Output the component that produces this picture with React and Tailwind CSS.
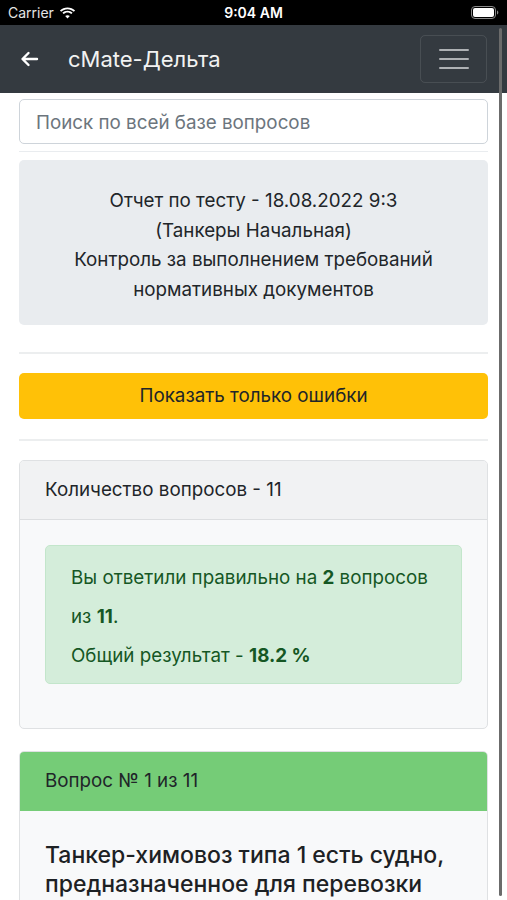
import React from 'react';

const font = { fontFamily: 'Inter, "Liberation Sans", Arial, sans-serif' };

const Wifi = () => (
  <svg width="17" height="12" viewBox="0 0 17 12" fill="#fff">
    <path d="M8.5 2.2c2.4 0 4.6.9 6.3 2.5l1.3-1.3C14.1 1.5 11.4.4 8.5.4S2.9 1.5.9 3.4l1.3 1.3C3.9 3.1 6.1 2.2 8.5 2.2z" />
    <path d="M8.5 5.6c1.5 0 2.8.6 3.8 1.5l1.3-1.3C12.3 4.5 10.5 3.8 8.5 3.8S4.7 4.5 3.4 5.8l1.3 1.3c1-.9 2.3-1.5 3.8-1.5z" />
    <path d="M8.5 9l2.3-2.3c-.6-.5-1.4-.8-2.3-.8s-1.7.3-2.3.8L8.5 9z" transform="translate(0 2.4)" />
  </svg>
);

const Battery = () => (
  <svg width="28" height="13" viewBox="0 0 28 13">
    <rect x="0.5" y="0.5" width="24" height="12" rx="3.5" fill="none" stroke="#8a8a8a" />
    <rect x="2" y="2" width="21" height="9" rx="2" fill="#fff" />
    <path d="M26 4.5v4c.8-.3 1.3-1.1 1.3-2s-.5-1.7-1.3-2z" fill="#8a8a8a" />
  </svg>
);

const StatusBar = () => (
  <div className="h-[25px] bg-black flex items-center justify-between px-[8px] text-white relative">
    <div className="flex items-center gap-[5px]">
      <span className="text-[14px] text-[#e5e5e5]">Carrier</span>
      <Wifi />
    </div>
    <span className="absolute left-0 right-0 text-center text-[14px] font-semibold">9:04 AM</span>
    <Battery />
  </div>
);

const NavBar = () => (
  <div className="h-[68px] bg-[#343a40] flex items-center justify-between pl-[20px] pr-[20px]">
    <div className="flex items-center">
      <svg width="19" height="16" viewBox="0 0 19 16" fill="none" stroke="#fff" strokeWidth="2.4" strokeLinecap="round" strokeLinejoin="round">
        <path d="M17 8H3M8.5 2L2.5 8l6 6" />
      </svg>
      <span className="ml-[29px] text-[22px] text-[#f2f2f2] leading-none">cMate-Дельта</span>
    </div>
    <div className="w-[67px] h-[48px] border border-white/10 rounded-[5px] flex flex-col items-center justify-center gap-[7px]">
      <span className="block w-[30px] h-[2px] bg-[#aeb1b4] rounded"></span>
      <span className="block w-[30px] h-[2px] bg-[#aeb1b4] rounded"></span>
      <span className="block w-[30px] h-[2px] bg-[#aeb1b4] rounded"></span>
    </div>
  </div>
);

export default function App() {
  return (
    <div className="relative w-[507px] h-[900px] overflow-hidden bg-white text-[#212529]" style={font}>
      <StatusBar />
      <NavBar />
      <div className="px-[19px] pt-[6px]">
        <div className="h-[45px] border border-[#ced4da] rounded-[5px] flex items-center px-[16px] pt-[3px] text-[18.8px] text-[#6c757d]">
          Поиск по всей базе вопросов
        </div>
        <div className="h-[1px] bg-[#e9ecef] mt-[7px]"></div>
        <div className="mt-[8px] h-[165px] bg-[#e9ecef] rounded-[5px] flex flex-col items-center justify-center text-center text-[18.8px] leading-[29.5px] pt-[5px]">
          <div>Отчет по тесту - 18.08.2022 9:3</div>
          <div>(Танкеры Начальная)</div>
          <div>Контроль за выполнением требований</div>
          <div>нормативных документов</div>
        </div>
        <div className="h-[2px] bg-[#eceeef] mt-[27px]"></div>
        <div className="mt-[19px] h-[46px] bg-[#ffc107] rounded-[5px] flex items-center justify-center text-[18.8px] text-[#212529]">
          Показать только ошибки
        </div>
        <div className="h-[2px] bg-[#eceeef] mt-[20px]"></div>
        <div className="mt-[19px] border border-[#dfe1e3] rounded-[5px] bg-[#f8f9fa] overflow-hidden">
          <div className="h-[59px] bg-[#f1f2f3] border-b border-[#dcdee0] flex items-center px-[25px] text-[18.8px]">
            Количество вопросов - 11
          </div>
          <div className="px-[25px] pt-[25px] pb-[44px]">
            <div className="bg-[#d4edda] border border-[#c3e6cb] rounded-[5px] text-[#155724] text-[18.8px] leading-[39px] px-[25px] pt-[12px] pb-[8px]">
              <p>Вы ответили правильно на <span className="font-bold">2</span> вопросов из <span className="font-bold">11</span>.</p>
              <p>Общий результат - <span className="font-bold">18.2 %</span></p>
            </div>
          </div>
        </div>
        <div className="mt-[22px] border border-[#dfe1e3] rounded-[5px] bg-[#f8f9fa] overflow-hidden">
          <div className="h-[59px] bg-[#75cc77] flex items-center px-[25px] text-[18.8px]">
            Вопрос № 1 из 11
          </div>
          <div className="px-[25px] pt-[30px] pb-[20px] text-[23px] leading-[29px] font-medium text-[#1d2124]">
            Танкер-химовоз типа 1 есть судно, предназначенное для перевозки продуктов, указанных в главе 17 МКХ
          </div>
        </div>
      </div>
      <div className="absolute right-[5px] top-[28px] w-[3px] h-[868px] bg-[#6b6b6b] rounded-full"></div>
    </div>
  );
}
